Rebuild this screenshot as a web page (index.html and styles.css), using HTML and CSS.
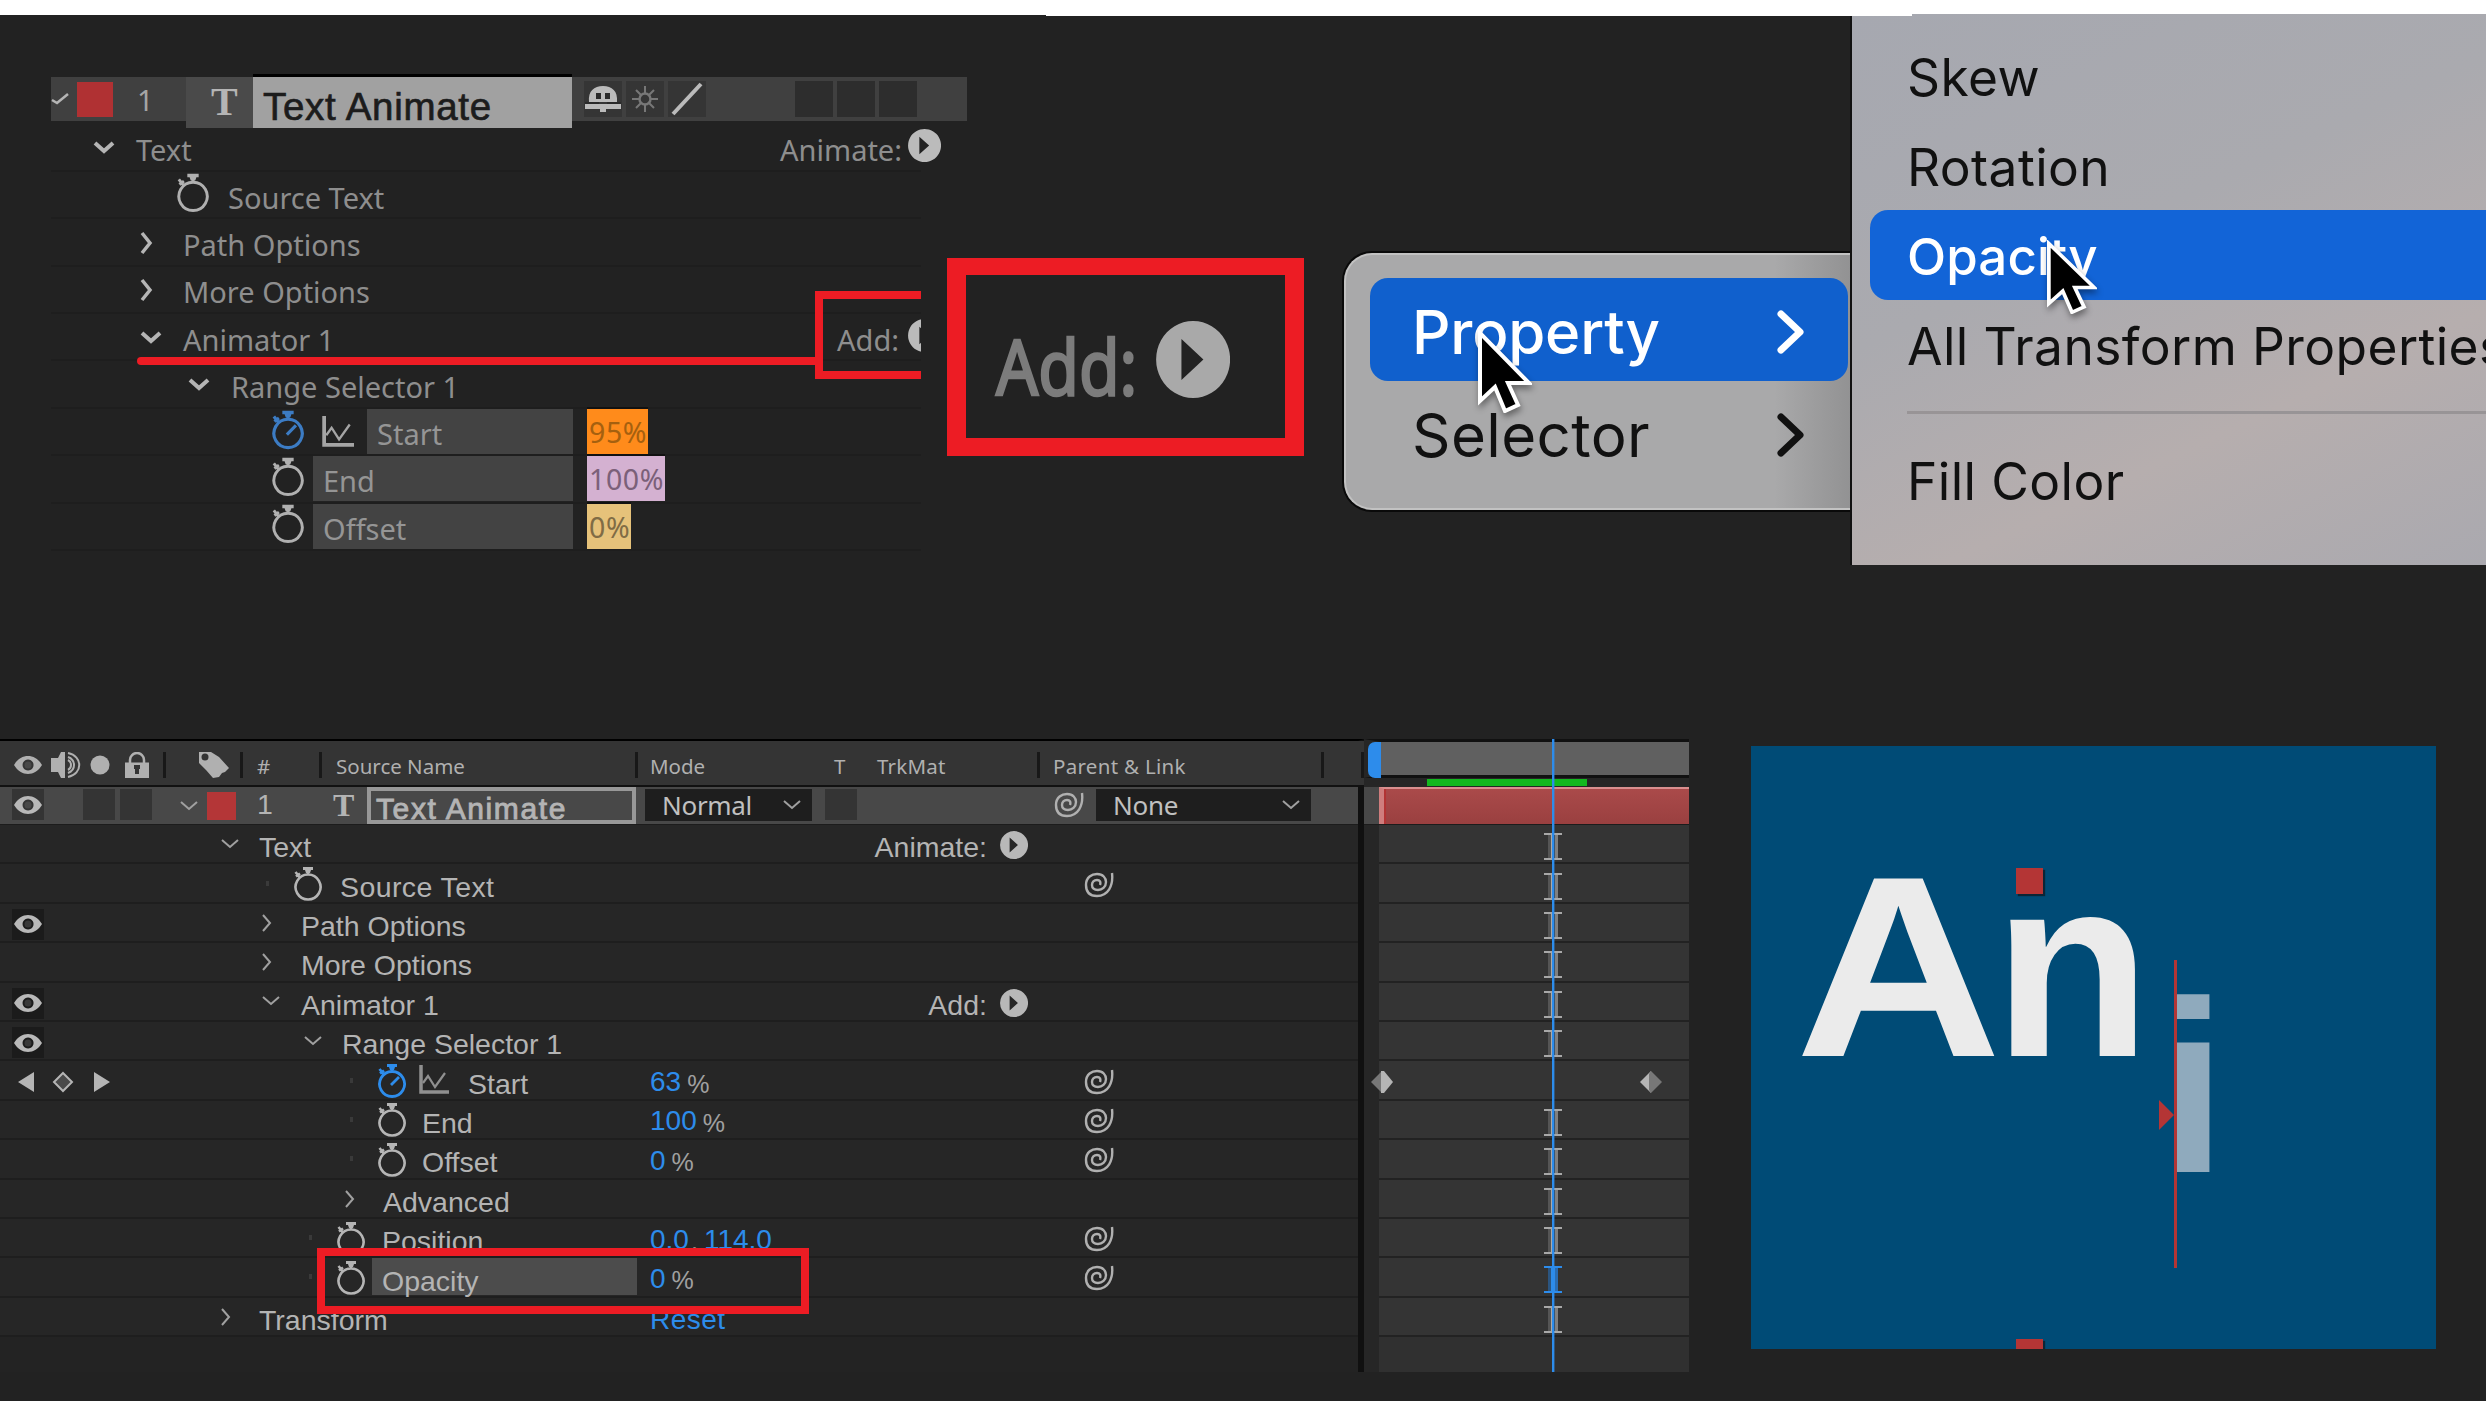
FILE: index.html
```html
<!DOCTYPE html>
<html lang="en">
<head>
    <meta charset="UTF-8">
    <meta name="viewport" content="width=device-width, initial-scale=1.0">
    <title>Text Animate</title>
    <link rel="stylesheet" href="styles.css">
</head>
<body>
    <!-- Icons -->
    <svg class="defs">
        <symbol id="watch" viewBox="0 0 30 34"><path d="M15 7.500a12.500 12.500 0 1 0 .1 0zM15 8V2M2.500 5l4 5M3 9.500l4-3" fill="none" stroke="currentColor" stroke-width="2.600"/><path d="M10 0h10v3h-2l-1 3h-4l-1-3h-2z" fill="currentColor"/></symbol>
        <symbol id="watch-on" viewBox="0 0 30 34"><path d="M15 7.500a12.500 12.500 0 1 0 .1 0zM15 8V2M2.500 5l4 5M3 9.500l4-3M14 21l8-8" fill="none" stroke="currentColor" stroke-width="2.800"/><path d="M10 0h10v3h-2l-1 3h-4l-1-3h-2z" fill="currentColor"/></symbol>
        <symbol id="graph" viewBox="0 0 30 30"><path d="M2 0v27h28" fill="none" stroke="currentColor" stroke-width="3.500"/><path d="M4 18l5-7 7 11 10-14" fill="none" stroke="currentColor" stroke-width="2.200"/></symbol>
        <symbol id="down" viewBox="0 0 20 12"><path d="M2 2l8 7 8-7" fill="none" stroke="currentColor" stroke-width="2"/></symbol>
        <symbol id="right" viewBox="0 0 12 20"><path d="M2 2l7 8-7 8" fill="none" stroke="currentColor" stroke-width="2"/></symbol>
        <symbol id="down-b" viewBox="0 0 24 16"><path d="M3 3l9 8 9-8" fill="none" stroke="currentColor" stroke-width="4"/></symbol>
        <symbol id="right-b" viewBox="0 0 16 24"><path d="M3 2l8 10-8 10" fill="none" stroke="currentColor" stroke-width="3.500"/></symbol>
        <symbol id="play" viewBox="0 0 32 32"><path d="M16 0a16 16 0 1 0 .1 0zM11 7.500l9.500 8.500-9.500 8.500z" fill="currentColor" fill-rule="evenodd"/></symbol>
        <symbol id="eye" viewBox="0 0 28 18"><path d="M0 9C7-3 21-3 28 9 21 21 7 21 0 9zM14 3.500a5.500 5.500 0 1 0 .1 0z" fill="currentColor" fill-rule="evenodd"/><circle cx="14" cy="9" r="3.500" fill="#707070" opacity=".35"/></symbol>
        <symbol id="whip" viewBox="0 0 30 26"><path d="M28 1c1.500 13-4 23-15 23C5 24 2 19 2 13 2 5 8 2 13 2c6 0 9 4 9 8 0 5-4 8-8 8s-6-2-6-5 2-5 5-5 4 2 3 5" fill="none" stroke="currentColor" stroke-width="2.400"/></symbol>
        <symbol id="cursor" viewBox="0 0 54 84"><path d="M2 4v68l15-14 10 24 13-6-10-22h21z" fill="#000" stroke="#fff" stroke-width="4"/></symbol>
        <symbol id="chev" viewBox="0 0 30 44"><path d="M5 4l19 18L5 40" fill="none" stroke="currentColor" stroke-width="7" stroke-linecap="round" stroke-linejoin="round"/></symbol>
    </svg>

    <div class="strip"><i></i><i></i><i></i></div>

    <div class="top">
        <!-- Layer properties -->
        <div class="props">
            <div class="layer">
                <svg class="check" viewBox="0 0 18 14"><path d="M1 8l5 3L17 2" fill="none" stroke="currentColor" stroke-width="2.500"/></svg>
                <span class="swatch"></span>
                <span class="num">1</span>
                <span class="type">T</span>
                <span class="name">Text Animate</span>
                <span class="switch"><svg width="36" height="28" viewBox="0 0 36 28"><path d="M4 17C3 6 9 1 18 1s15 5 14 16zM0 19h36v5H21v3h-6v-3H0z" fill="currentColor"/><path d="M11 8h5v6h-5zM20 8h5v6h-5zM0 17h14v2H0zM22 17h14v2H22z" fill="#2a2a2a"/></svg></span>
                <span class="switch dim"><svg width="28" height="28" viewBox="0 0 28 28"><circle cx="14" cy="14" r="5.500" fill="none" stroke="currentColor" stroke-width="2.500"/><path d="M14 1v7M14 20v7M1 14h7M20 14h7M5 5l5 5M18 18l5 5M23 5l-5 5M10 18l-5 5" stroke="currentColor" stroke-width="2"/></svg></span>
                <span class="switch"><svg width="32" height="34" viewBox="0 0 32 34"><path d="M2 32L30 2" stroke="currentColor" stroke-width="4"/></svg></span>
                <span class="switch blank first"></span>
                <span class="switch blank"></span>
                <span class="switch blank"></span>
            </div>
            <div class="prow p1"><svg class="d"><use href="#down-b"/></svg><span>Text</span><span class="end">Animate:</span><svg class="pl"><use href="#play"/></svg></div>
            <div class="prow p3"><svg class="w"><use href="#watch"/></svg><span>Source Text</span></div>
            <div class="prow p2"><svg class="r"><use href="#right-b"/></svg><span>Path Options</span></div>
            <div class="prow p2"><svg class="r"><use href="#right-b"/></svg><span>More Options</span></div>
            <div class="prow p2"><svg class="d"><use href="#down-b"/></svg><span>Animator 1</span><span class="end add">Add:</span><div class="half"><svg class="pl"><use href="#play"/></svg></div></div>
            <div class="prow p4"><svg class="d"><use href="#down-b"/></svg><span>Range Selector 1</span></div>
            <div class="prow p5"><svg class="w blue"><use href="#watch-on"/></svg><svg class="g"><use href="#graph"/></svg><span class="field short">Start</span><span class="val orange">95%</span></div>
            <div class="prow p5"><svg class="w"><use href="#watch"/></svg><span class="field">End</span><span class="val pink">100%</span></div>
            <div class="prow p5"><svg class="w"><use href="#watch"/></svg><span class="field">Offset</span><span class="val sand">0%</span></div>
            <div class="mark-line"></div>
            <div class="mark-box"></div>
        </div>

        <!-- Enlarged Add button -->
        <div class="callout"><span>Add:</span><svg width="74" height="77" viewBox="0 0 32 32" preserveAspectRatio="none"><use href="#play" width="32" height="32"/></svg></div>

        <!-- Add menu -->
        <div class="menu">
            <div class="mi on"><span>Property</span><svg><use href="#chev"/></svg></div>
            <div class="mi"><span>Selector</span><svg><use href="#chev"/></svg></div>
            <svg class="cur c1"><use href="#cursor"/></svg>
        </div>
        <div class="submenu">
            <div class="si">Skew</div>
            <div class="si">Rotation</div>
            <div class="si on">Opacity</div>
            <div class="si">All Transform Properties</div>
            <hr>
            <div class="si">Fill Color</div>
            <svg class="cur c2" viewBox="0 0 54 84" preserveAspectRatio="none"><use href="#cursor" width="54" height="84"/></svg>
        </div>
    </div>

    <div class="bottom">
        <!-- Timeline outline -->
        <div class="timeline">
            <div class="head">
                <div class="h-av">
                    <svg width="28" height="18"><use href="#eye"/></svg>
                    <svg width="30" height="26" viewBox="0 0 30 26"><path d="M0 6h7l3-6h4v26h-4l-3-6H0z" fill="currentColor"/><path d="M17 8c4 2 4 8 0 10M17 5c8 3 8 13 0 16M17 1c15 3 15 21 0 24" fill="none" stroke="currentColor" stroke-width="2"/></svg>
                    <svg width="20" height="20"><circle cx="10" cy="10" r="9.500" fill="currentColor"/></svg>
                    <svg width="26" height="26" viewBox="0 0 26 26"><path d="M6 12V8a7 7 0 0 1 14 0v4" fill="none" stroke="currentColor" stroke-width="2.500"/><path d="M1 10.500h24V26H1z" fill="currentColor"/><path d="M10 13h6v4h-1v5h-4v-5h-1z" fill="#333"/></svg>
                </div>
                <div class="h-tag"><svg width="30" height="26" viewBox="0 0 30 26"><path d="M0 0h12l8 5 10 11-4 4-3 1-3 4-6 1L7 18 0 11z" fill="currentColor"/><circle cx="6" cy="5" r="3.500" fill="#333"/></svg></div>
                <div class="h-num">#</div>
                <div class="h-src">Source Name</div>
                <div class="h-mode">Mode</div>
                <div class="h-t">T</div>
                <div class="h-trk">TrkMat</div>
                <div class="h-par">Parent &amp; Link</div>
                <div class="h-end"></div>
            </div>
            <div class="lrow">
                <div class="av"><span class="box"><svg class="eye"><use href="#eye"/></svg></span><span class="box b2"></span><span class="box b3"></span></div>
                <svg class="dn"><use href="#down"/></svg>
                <span class="lswatch"></span>
                <span class="lnum">1</span>
                <span class="ltype">T</span>
                <span class="lname">Text Animate</span>
                <span class="drop mode">Normal<svg><use href="#down"/></svg></span>
                <span class="box t"></span>
                <svg class="whip"><use href="#whip"/></svg>
                <span class="drop none">None<svg><use href="#down"/></svg></span>
            </div>
            <div class="row"><div class="av"></div><div class="nm i1"><svg class="dn"><use href="#down"/></svg><span>Text</span></div><div class="vl btn"><span>Animate:</span><svg class="play"><use href="#play"/></svg></div><div class="pr"></div></div>
            <div class="row"><div class="av"></div><div class="nm i3 dot"><svg class="sw"><use href="#watch"/></svg><span>Source Text</span></div><div class="vl"></div><div class="pr"><svg class="whip"><use href="#whip"/></svg></div></div>
            <div class="row"><div class="av"><span class="box dark"><svg class="eye"><use href="#eye"/></svg></span></div><div class="nm i2"><svg class="rt"><use href="#right"/></svg><span>Path Options</span></div><div class="vl"></div><div class="pr"></div></div>
            <div class="row"><div class="av"></div><div class="nm i2"><svg class="rt"><use href="#right"/></svg><span>More Options</span></div><div class="vl"></div><div class="pr"></div></div>
            <div class="row"><div class="av"><span class="box dark"><svg class="eye"><use href="#eye"/></svg></span></div><div class="nm i2"><svg class="dn"><use href="#down"/></svg><span>Animator 1</span></div><div class="vl btn"><span>Add:</span><svg class="play"><use href="#play"/></svg></div><div class="pr"></div></div>
            <div class="row"><div class="av"><span class="box dark"><svg class="eye"><use href="#eye"/></svg></span></div><div class="nm i4"><svg class="dn"><use href="#down"/></svg><span>Range Selector 1</span></div><div class="vl"></div><div class="pr"></div></div>
            <div class="row"><div class="av"><svg class="nav" viewBox="0 0 94 22"><path d="M17 1v20L1 11zM77 1v20l16-10z" fill="currentColor"/><path d="M46 2l9 9-9 9-9-9z" fill="#4a4a4a" stroke="currentColor" stroke-width="2"/></svg></div><div class="nm i6 dot"><svg class="sw blue"><use href="#watch-on"/></svg><svg class="gr"><use href="#graph"/></svg><span>Start</span></div><div class="vl"><b>63</b><em>%</em></div><div class="pr"><svg class="whip"><use href="#whip"/></svg></div></div>
            <div class="row"><div class="av"></div><div class="nm i6 dot"><svg class="sw"><use href="#watch"/></svg><span>End</span></div><div class="vl"><b>100</b><em>%</em></div><div class="pr"><svg class="whip"><use href="#whip"/></svg></div></div>
            <div class="row"><div class="av"></div><div class="nm i6 dot"><svg class="sw"><use href="#watch"/></svg><span>Offset</span></div><div class="vl"><b>0</b><em>%</em></div><div class="pr"><svg class="whip"><use href="#whip"/></svg></div></div>
            <div class="row"><div class="av"></div><div class="nm i5"><svg class="rt"><use href="#right"/></svg><span>Advanced</span></div><div class="vl"></div><div class="pr"></div></div>
            <div class="row"><div class="av"></div><div class="nm i7 dot"><svg class="sw"><use href="#watch"/></svg><span>Position</span></div><div class="vl"><b>0.0</b><em class="comma">,</em><b>114.0</b></div><div class="pr"><svg class="whip"><use href="#whip"/></svg></div></div>
            <div class="row"><div class="av"></div><div class="nm i7 dot"><svg class="sw"><use href="#watch"/></svg><span class="hl">Opacity</span></div><div class="vl"><b>0</b><em>%</em></div><div class="pr"><svg class="whip"><use href="#whip"/></svg></div></div>
            <div class="row"><div class="av"></div><div class="nm i1"><svg class="rt"><use href="#right"/></svg><span>Transform</span></div><div class="vl reset"><b>Reset</b></div><div class="pr"></div></div>
            <div class="mark-opacity"></div>
        </div>

        <!-- Tracks -->
        <div class="tracks">
            <div class="ruler"></div>
            <div class="work"><span></span></div>
            <div class="bar"><span></span></div>
            <div class="tr"><i></i></div>
            <div class="tr"><i></i></div>
            <div class="tr"><i></i></div>
            <div class="tr"><i></i></div>
            <div class="tr"><i></i></div>
            <div class="tr"><i></i></div>
            <div class="tr keys">
                <svg width="24" height="22" viewBox="0 0 24 22"><path d="M12 0v22L1 11z" fill="#777"/><path d="M11 0h3l9 11-9 11h-3z" fill="#b5b5b5"/></svg>
                <svg width="24" height="22" viewBox="0 0 24 22"><path d="M12 0v22L1 11z" fill="#b5b5b5"/><path d="M10 3l2-3 11 11-11 11-2-3z" fill="#777"/></svg>
            </div>
            <div class="tr"><i></i></div>
            <div class="tr"><i></i></div>
            <div class="tr"><i></i></div>
            <div class="tr"><i></i></div>
            <div class="tr"><i class="sel"></i></div>
            <div class="tr"><i></i></div>
            <div class="tr last"></div>
            <div class="playhead"></div>
        </div>

        <!-- Composition viewer -->
        <div class="viewer">
            <span class="an"><span class="wide">A</span>n</span>
            <span class="i">i</span>
            <span class="handle"></span>
            <span class="handle low"></span>
            <svg class="range" width="18" height="308" viewBox="0 0 18 308"><path d="M16.500 0v308" stroke="#b43535" stroke-width="3"/><path d="M0 140v30l15-15z" fill="#b43535"/></svg>
        </div>
    </div>
</body>
</html>
```
FILE: styles.css
```css
* {
    box-sizing: border-box;
}
body {
    margin: 0;
    width: 2486px;
    height: 1401px;
    overflow: hidden;
    background: #222;
    color: #a0a0a0;
    font-family: "Noto Sans", sans-serif;
}
svg {
    flex: none;
    display: block;
}
.defs {
    position: absolute;
    width: 0;
    height: 0;
}
.strip {
    display: flex;
    height: 14px;
}
.strip i {
    background: #fff;
    width: 1046px;
    height: 15px;
}
.strip i:nth-child(2) {
    width: 866px;
    height: 16px;
    z-index: 1;
}
.strip i:nth-child(3) {
    width: 574px;
    height: 14px;
}
.top {
    display: flex;
    align-items: flex-start;
    height: 725px;
}

/* layer properties */
.props {
    position: relative;
    width: 896px;
    margin: 63px 0 0 51px;
    font-size: 29px;
    letter-spacing: 0;
    color: #8e8e8e;
}
.layer {
    display: flex;
    align-items: center;
    width: 916px;
    height: 44px;
    background: #404040;
    margin-bottom: 3.5px;
}
.check {
    width: 18px;
    height: 14px;
    color: #b5b5b5;
}
.swatch {
    width: 36px;
    height: 35px;
    margin-left: 8px;
    background: #b03133;
}
.num {
    width: 73px;
    padding-left: 24px;
    color: #a5a5a5;
}
.type {
    width: 67px;
    height: 51px;
    margin-top: 6px;
    background: #4a4a4a;
    color: #b5b5b5;
    font: bold 40px/50px "Liberation Serif", serif;
    padding-left: 25px;
}
.name {
    width: 319px;
    height: 51px;
    margin: 6px 12px 0 0;
    padding-left: 10px;
    background: #a1a1a1;
    color: #1c1c1c;
    font: 38.5px/59px "Liberation Sans", sans-serif;
    letter-spacing: 0.7px;
    -webkit-text-stroke: 0.7px #1c1c1c;
    box-shadow: 0 -3px #000;
}
.layer .switch {
    width: 38px;
    height: 36px;
    margin-right: 4px;
    background: #353535;
    display: flex;
    align-items: center;
    justify-content: center;
    color: #bbb;
}
.layer .dim {
    color: #777;
}
.layer .blank {
    background: #2d2d2d;
}
.layer .first {
    margin-left: 85px;
}
.prow {
    display: flex;
    align-items: center;
    width: 870px;
    height: 47.4px;
    border-bottom: 2px solid #1e1e1e;
    white-space: nowrap;
}
.prow > span {
    padding-top: 5px;
}
.prow .d {
    width: 24px;
    height: 16px;
    margin: 2px 20px 0 0;
    color: #b5b5b5;
}
.prow .r {
    width: 16px;
    height: 24px;
    margin: 2px 28px 0 0;
    color: #b5b5b5;
}
.prow .w {
    width: 34px;
    height: 40px;
    margin-top: -4px;
    color: #b0b0b0;
}
.prow .w + span {
    margin-left: 18px;
}
.prow .w.blue {
    color: #3c7cc4;
}
.prow .g {
    width: 32px;
    height: 32px;
    margin: 0 13px 0 17px;
    color: #a5a5a5;
}
.pl {
    width: 33px;
    height: 33px;
    margin: -3px 0 0 6px;
    color: #bbb;
}
.prow .end {
    margin-left: auto;
}
.p1 { padding-left: 41px; }
.p1 .pl { margin-right: -20px; }
.p2 { padding-left: 88px; }
.p3 { padding-left: 125px; }
.p4 { padding-left: 136px; }
.p5 { padding-left: 220px; }
.half {
    display: flex;
    align-items: center;
    width: 22px;
    height: 45px;
    overflow: hidden;
    padding-left: 9px;
}
.half .pl {
    margin-left: 0;
}
.prow .field {
    width: 260px;
    height: 45px;
    line-height: 44px;
    margin-left: 8px !important;
    padding: 3px 0 0 10px;
    background: #434343;
    color: #959595;
}
.prow .short {
    width: 206px;
    margin-left: 0 !important;
}
.prow .val {
    height: 45px;
    line-height: 46px;
    padding: 0 0 0 2px;
    margin-left: 14px;
    overflow: hidden;
    font-size: 28.5px;
    letter-spacing: 0.6px;
    box-shadow: 0 -2px #111;
}
.orange { width: 61px; background: #ff8b1b; color: #a5600f; }
.pink { width: 78px; background: #d4b1d1; color: #7b6079; }
.sand { width: 44px; background: #e6c27a; color: #806c45; }
.mark-line {
    position: absolute;
    left: 86px;
    top: 280px;
    width: 680px;
    height: 8px;
    border-radius: 4px 0 0 4px;
    background: #ed1c24;
}
.mark-box {
    position: absolute;
    left: 764px;
    top: 214px;
    width: 106px;
    height: 88px;
    border: 8px solid #ed1c24;
    border-right: 0;
}

/* enlarged add button */
.callout {
    display: flex;
    align-items: center;
    width: 357px;
    height: 198px;
    margin-top: 244px;
    border: solid #ed1c24;
    border-width: 17px 19px 18px;
    z-index: 1;
}
.callout span {
    width: 153px;
    padding-left: 30px;
    font-size: 76px;
    line-height: 80px;
    padding-top: 18px;
    color: #7c7c7c;
    -webkit-text-stroke: 2.5px #7c7c7c;
    transform: scaleX(0.87);
    transform-origin: 30px 0;
}
.callout svg {
    margin: 6px 0 0 37px;
    color: #a9a9a9;
}

/* menus */
.menu {
    position: relative;
    width: 506px;
    height: 257px;
    margin: 239px 0 0 40px;
    padding: 23px 2px 0 24px;
    border-radius: 28px 0 0 28px;
    background: linear-gradient(90deg, #a9a9aa 85%, #929293);
    border: 2px solid #c2c2c2;
    border-right: 0;
    box-shadow: 0 0 0 2px #0a0a0a;
    font-family: Inter, sans-serif;
    font-size: 60px;
    color: #111;
}
.mi {
    display: flex;
    align-items: center;
    justify-content: space-between;
    height: 103px;
    padding: 4px 42px 0 42px;
    letter-spacing: 0.4px;
}
.mi svg {
    width: 30px;
    height: 44px;
}
.mi.on {
    background: #1060cd;
    color: #fff;
    font-weight: 500;
    border-radius: 18px;
    letter-spacing: -0.2px;
}
.cur {
    position: absolute;
    filter: drop-shadow(1px 4px 3px rgba(0, 0, 0, 0.4));
}
.c1 {
    left: 132px;
    top: 74px;
    width: 54px;
    height: 84px;
}
.c2 {
    left: 195px;
    top: 226px;
    width: 50px;
    height: 74px;
}
.submenu {
    position: relative;
    width: 636px;
    height: 551px;
    padding-top: 17px;
    overflow: hidden;
    border-left: 2px solid #111;
    background: linear-gradient(155deg, #a6a8b0 0%, #aaaaaf 40%, #b6aeae 70%, #aaa9af 100%);
    font-family: Inter, sans-serif;
    font-size: 51.5px;
    color: #111;
}
.si {
    height: 89.6px;
    line-height: 93px;
    padding-left: 55px;
    white-space: nowrap;
    letter-spacing: 0.4px;
}
.si.on {
    margin-left: 18px;
    padding-left: 37px;
    border-radius: 18px 0 0 18px;
    background: #1264d7;
    color: #fff;
    font-weight: 500;
    font-size: 51px;
    letter-spacing: 0.1px;
}
.submenu hr {
    height: 3px;
    border: 0;
    margin: 22px 0 21px 55px;
    background: #989496;
}

/* timeline */
.bottom {
    display: flex;
    align-items: flex-start;
}
.timeline {
    position: relative;
    width: 1364px;
    height: 633px;
    border-top: 2px solid #000;
    border-right: 6px solid #101010;
    background: #232323;
    font-family: "Liberation Sans", sans-serif;
    font-size: 28.5px;
    color: #b4b4b4;
}
.head {
    display: flex;
    align-items: center;
    width: 1364px;
    height: 46px;
    padding-top: 3px;
    background: #343434;
    border-bottom: 2px solid #111;
    font: 20.5px "Noto Sans", sans-serif;
    color: #b0b0b0;
}
.head > div {
    height: 26px;
    line-height: 28px;
    border-right: 3px solid #181818;
}
.head .h-av {
    width: 166px;
    display: flex;
    align-items: center;
    padding-left: 14px;
    gap: 9px;
}
.head .h-av svg:nth-child(4) {
    margin-left: 5px;
}
.head .h-tag { width: 77px; padding-left: 33px; }
.head .h-num { width: 79px; padding-left: 14px; }
.head .h-src { width: 316px; padding-left: 14px; }
.head .h-mode { width: 196px; padding-left: 12px; border: 0; }
.head .h-t { width: 43px; border: 0; }
.head .h-trk { width: 163px; letter-spacing: 0.2px; }
.head .h-par { width: 284px; padding-left: 13px; letter-spacing: 0.3px; }
.head .h-end { flex: 1; }
.box {
    display: flex;
    align-items: center;
    justify-content: center;
    width: 32px;
    height: 31px;
    background: #343434;
}
.dark {
    background: #1b1b1b;
}
.eye {
    width: 28px;
    height: 18px;
    color: #b8b8b8;
}
.av {
    display: flex;
    align-items: center;
    width: 164px;
    padding-left: 12px;
}
.b2 { margin-left: 39px; }
.b3 { margin-left: 5px; }
.lrow {
    display: flex;
    align-items: center;
    height: 38px;
    background: #484848;
    border-bottom: 1px solid #1c1c1c;
}
.lrow .av .box {
    margin-top: -2px;
}
.dn {
    width: 20px;
    height: 12px;
    margin-right: 20px;
    color: #a0a0a0;
}
.rt {
    width: 12px;
    height: 20px;
    margin: 1px 28px 0 0;
    color: #a0a0a0;
}
.lrow > .dn {
    margin: 1px 8px 0 15px;
}
.lswatch {
    width: 29px;
    height: 28px;
    background: #b43637;
}
.lnum {
    width: 97px;
    padding-left: 21px;
    margin-top: -3px;
}
.ltype {
    width: 34px;
    margin-top: -2px;
    font: bold 32px/34px "Liberation Serif", serif;
}
.lname {
    width: 269px;
    height: 37px;
    border: 4px solid #989898;
    padding-left: 5px;
    font-size: 30px;
    line-height: 35px;
    letter-spacing: 1.6px;
    -webkit-text-stroke: 0.9px #b4b4b4;
}
.drop {
    display: flex;
    align-items: center;
    height: 32px;
    margin-top: -2px;
    background: #1e1e1e;
    font: 26px/30px "Noto Sans", sans-serif;
    letter-spacing: -0.3px;
    color: #c0c0c0;
    padding-left: 17px;
}
.drop svg {
    width: 20px;
    height: 12px;
    margin: 0 10px 0 auto;
    color: #a0a0a0;
}
.mode { width: 167px; margin-left: 9px; }
.none { width: 215px; margin-left: 12px; }
.t {
    margin: -2px 197px 0 13px;
}
.whip {
    width: 30px;
    height: 26px;
    color: #b0b0b0;
}
.lrow > .whip {
    margin-top: -2px;
}
.row {
    display: flex;
    height: 39.4px;
    background: #262626;
    border-bottom: 2px solid #1e1e1e;
}
.nm, .vl, .pr {
    display: flex;
    align-items: center;
    white-space: nowrap;
}
.row .av, .pr {
    padding-top: 3px;
}
.row .av .box {
    margin-top: 1px;
}
.nm { width: 486px; }
.vl { width: 390px; padding-top: 4px; }
.pr { padding-left: 44px; }
.nm span {
    padding-top: 8px;
}
.sw {
    width: 30px;
    height: 34px;
    margin: 2px 16px 0 0;
    color: #b5b5b5;
}
.sw.blue {
    color: #2d8ceb;
    margin-right: 12px;
}
.gr {
    width: 30px;
    height: 30px;
    margin-right: 19px;
    color: #909090;
}
.i1 { padding-left: 56px; }
.i1 .dn { margin-right: 19px; }
.i2 { padding-left: 97px; }
.i3 { padding-left: 129px; }
.i3 .sw { margin-right: 17px; }
.i3 span { letter-spacing: 0.4px; }
.i4 { padding-left: 139px; }
.i4 .dn { margin-right: 19px; }
.i5 { padding-left: 180px; }
.i6 { padding-left: 213px; }
.i6 .sw { margin-right: 15px; }
.i6 .sw.blue { margin-right: 12px; }
.i7 { padding-left: 172px; }
.i1 .rt, .i5 .rt { margin-right: 27px; }
.dot::before {
    content: "";
    width: 3px;
    height: 5px;
    margin: 0 24px 0 -27px;
    background: #3a3a3a;
}
.nm .hl {
    width: 265px;
    height: 37px;
    line-height: 36px;
    margin-left: -10px;
    padding: 5px 0 0 10px;
    background: #4c4c4c;
}
.vl b {
    font-weight: normal;
    font-size: 28px;
    color: #2d8ceb;
}
.reset {
    padding-top: 8px;
}
.reset b {
    letter-spacing: 0.5px;
}
.vl em {
    font-style: normal;
    font-size: 25px;
    padding-top: 4px;
    margin-left: 6px;
    color: #a0a0a0;
}
.vl .comma {
    margin: 0 6px 0 2px;
}
.btn {
    width: 378px;
    justify-content: flex-end;
    margin-right: 12px;
    padding-top: 3px;
}
.btn span {
    padding-top: 5px;
}
.play {
    width: 28px;
    height: 28px;
    margin-left: 13px;
    color: #b8b8b8;
}
.nav {
    width: 94px;
    height: 22px;
    margin: 1px 0 0 5px;
    color: #b5b5b5;
}
.mark-opacity {
    position: absolute;
    left: 317px;
    top: 507px;
    width: 492px;
    height: 66px;
    border: 8px solid #ed1c24;
}

/* tracks */
.tracks {
    position: relative;
    width: 325px;
    height: 633px;
    background: #262626;
}
.ruler {
    height: 39px;
    border-top: 3px solid #111;
    border-bottom: 3px solid #111;
    border-left: 17px solid #262626;
    background: #606060;
}
.ruler::before {
    content: "";
    display: block;
    width: 13px;
    height: 36px;
    margin: 0 0 0 -13px;
    border-radius: 7px 0 0 7px;
    background: #2d8ceb;
}
.work {
    height: 9px;
    padding: 1px 0 0 63px;
}
.work span {
    display: block;
    width: 160px;
    height: 7px;
    background: #13b81f;
}
.bar {
    height: 38px;
    padding-left: 15px;
    background: #484848;
    border-bottom: 1px solid #1c1c1c;
}
.bar span {
    display: block;
    height: 37px;
    border-top: 2px solid #d98f8f;
    border-left: 5px solid #cf7d7d;
    background: linear-gradient(90deg, #b23434 2px, transparent 2px), linear-gradient(#aa4a4a, #9a4040);
}
.tr {
    display: flex;
    align-items: center;
    height: 39.4px;
    margin-left: 15px;
    padding-left: 165px;
    background: #343434;
    border-bottom: 2px solid #222;
}
.tr.last {
    height: 35px;
    background: #303030;
    border: 0;
}
.tr i {
    width: 18px;
    height: 27px;
    margin-top: 6px;
    border: solid #a8a8a8;
    border-width: 2px 0;
    background: linear-gradient(90deg, transparent 4px, #555 4px, #555 7px, #aaa 7px, #aaa 8px, transparent 8px, transparent 11px, #808080 11px, #808080 14px, transparent 14px);
}
.tr .sel {
    border-color: #2d8ceb;
    background: linear-gradient(90deg, transparent 4px, #2b5580 4px, #2b5580 7px, #2d8ceb 7px, #2d8ceb 11px, #2a6db4 11px, #2a6db4 14px, transparent 14px);
}
.keys {
    padding: 3px 26px 0 0;
    justify-content: space-between;
}
.keys svg:first-child {
    margin-left: -9px;
}
.playhead {
    position: absolute;
    left: 188px;
    top: 0;
    width: 3px;
    height: 633px;
    background: linear-gradient(90deg, #2d8ceb 2px, rgba(45, 140, 235, 0.4) 2px);
}

/* viewer */
.viewer {
    position: relative;
    width: 685px;
    height: 603px;
    margin: 7px 0 0 62px;
    overflow: hidden;
    background: #004b76;
    font: bold 258px/1 "Liberation Sans", sans-serif;
}
.viewer > * {
    position: absolute;
}
.an {
    left: 54px;
    top: 92px;
    color: #ebebeb;
    letter-spacing: -5px;
}
.wide {
    display: inline-block;
    transform: scaleX(1.11);
    margin-right: 7px;
}
.i {
    left: 405px;
    top: 208px;
    color: #8faabd;
    transform: scaleY(0.95);
    transform-origin: 0 217px;
}
.handle {
    left: 265px;
    top: 122px;
    width: 27px;
    height: 26px;
    background: #b43535;
    box-shadow: 2px 2px 1px #0b2536;
}
.low {
    top: 593px;
}
.range {
    left: 408px;
    top: 214px;
}
```
